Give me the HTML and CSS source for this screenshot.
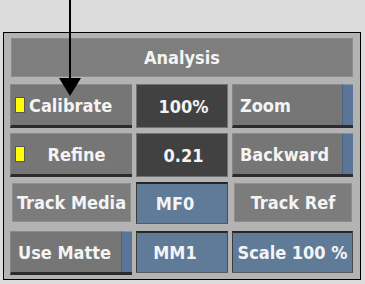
FILE: index.html
```html
<!DOCTYPE html>
<html lang="en">
  <head>
    <meta charset="UTF-8" />
    <title>Analysis</title>
    <link rel="stylesheet" href="styles.css">
  </head>
  <body>
    <div class="panel">
      <div class="title">Analysis</div>

      <div class="grid">
        <div class="btn btn-left">
          <span class="led"></span>
          <span class="btn-text">Calibrate</span>
        </div>
        <div class="field">100%</div>
        <div class="btn btn-left">
          <span class="btn-text">Zoom</span>
          <span class="stripe"></span>
        </div>

        <div class="btn">
          <span class="led"></span>
          <span class="btn-text center">Refine</span>
        </div>
        <div class="field">0.21</div>
        <div class="btn btn-left">
          <span class="btn-text">Backward</span>
          <span class="stripe"></span>
        </div>

        <div class="label">Track Media</div>
        <div class="blue blue-short">MF0</div>
        <div class="label">Track Ref</div>

        <div class="btn btn-left">
          <span class="btn-text">Use Matte</span>
          <span class="stripe"></span>
        </div>
        <div class="blue blue-short">MM1</div>
        <div class="blue">Scale 100 %</div>
      </div>
    </div>

    <!-- callout arrow -->
    <svg class="arrow" width="30" height="100" viewBox="0 0 30 100">
      <line x1="11" y1="0" x2="11" y2="80" stroke="#000" stroke-width="2" />
      <polygon points="0,78 22,78 11,96" fill="#000" />
    </svg>
  </body>
</html>
```

FILE: styles.css
```css
* {
  margin: 0;
  padding: 0;
  box-sizing: border-box;
}

body {
  background: #dcdcdc;
  font-family: "DejaVu Sans", "Liberation Sans", sans-serif;
  font-size: 18px;
  font-weight: bold;
  font-stretch: condensed;
  color: #f4f4f4;
  width: 365px;
  height: 284px;
  overflow: hidden;
  position: relative;
}

.panel {
  margin: 32px 0 0 3px;
  width: 358px;
  height: 248px;
  border: 1px solid #000;
  background: #b3b3b3;
  padding: 5px 6px 4px 6px;
}

.title {
  height: 39px;
  margin: 0 1px 7px 1px;
  background: #7e7e7e;
  border: 1px solid #8c8c8c;
  display: flex;
  align-items: center;
  justify-content: center;
}

.grid {
  display: grid;
  grid-template-columns: 122px 92px 121px;
  grid-template-rows: repeat(4, 44px);
  column-gap: 4px;
  row-gap: 5px;
}

.btn {
  display: flex;
  align-items: center;
  background: #767676;
  border-top: 1px solid #8a8a8a;
  border-left: 1px solid #858585;
  border-bottom: 3px solid #2c2c2c;
}

.btn-text {
  flex: 1;
  padding-left: 7px;
}

.btn-text.center {
  text-align: center;
  padding-left: 0;
  padding-right: 4px;
}

.led {
  width: 10px;
  height: 16px;
  margin-left: 4px;
  background: #ffff00;
  border: 1px solid #555;
}

.btn-left .led + .btn-text {
  padding-left: 4px;
}

.stripe {
  align-self: stretch;
  width: 11px;
  margin-top: -1px;
  background: #5b7598;
  border-top: 1px solid #7d93b0;
  border-left: 1px solid #4d6583;
}

.field {
  display: flex;
  align-items: center;
  justify-content: center;
  background: #414141;
  border: 1px solid #727272;
  padding-left: 3px;
}

.label {
  display: flex;
  align-items: center;
  justify-content: center;
  margin: 1px 1px 4px 2px;
  background: #7c7c7c;
  border: 1px solid #8e8e8e;
}

.blue {
  display: flex;
  align-items: center;
  justify-content: center;
  background: #5f7b98;
  border-top: 2px solid #262626;
  border-left: 1px solid #3c3c3c;
  border-right: 1px solid #4a4a4a;
  border-bottom: 1px solid #5a5a5a;
  margin-bottom: 2px;
}

.blue-short {
  padding-right: 14px;
}

.arrow {
  position: absolute;
  left: 59px;
  top: 0;
}
```
